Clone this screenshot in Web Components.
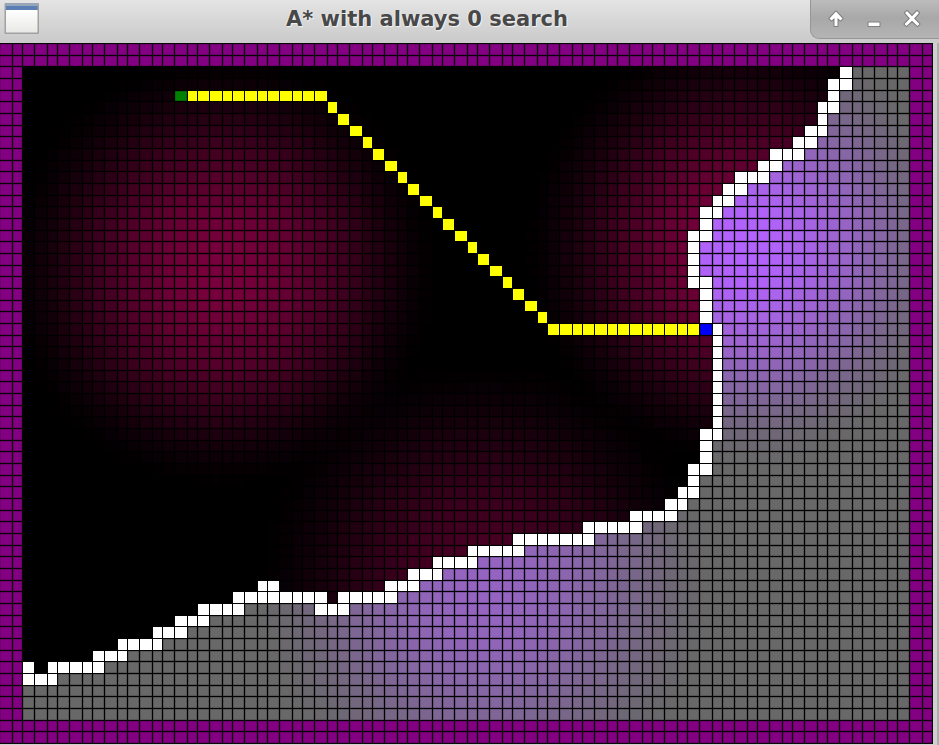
<!DOCTYPE html>
<html lang="en">
<head>
<meta charset="utf-8">
<title>A* with always 0 search</title>
<style>
  html, body { margin: 0; background: #cfd0cf; }
</style>
</head>
<body>
<app-window>
  <title-bar slot="bar">A* with always 0 search
    <window-button slot="actions" kind="up" label="Keep above"></window-button>
    <window-button slot="actions" kind="min" label="Minimize"></window-button>
    <window-button slot="actions" kind="close" label="Close"></window-button>
  </title-bar>
  <search-map></search-map>
</app-window>

<script>
class AppWindow extends HTMLElement {
  constructor() {
    super();
    this.attachShadow({ mode: "open" }).innerHTML = `
      <style>
        :host { display: flex; flex-direction: column; min-height: 100vh;
          background: linear-gradient(90deg, #cfd0cf calc(100% - 2px), #a9b0b0 calc(100% - 2px)); }
        main { padding-right: 6px; }
      </style>
      <slot name="bar"></slot>
      <main><slot></slot></main>`;
  }
}

class TitleBar extends HTMLElement {
  constructor() {
    super();
    this.attachShadow({ mode: "open" }).innerHTML = `
      <style>
        :host { display: grid; grid-template-columns: 44px 1fr auto; height: 43px;
          background: linear-gradient(#e4e4e4, #d6d6d6 50%, #cacaca); }
        svg { display: block; }
        h1 { margin: 0; padding-bottom: 6px; align-self: center; text-align: center; white-space: nowrap;
          font: bold 21px/24px "DejaVu Sans", sans-serif; color: #484848;
          text-shadow: 1px 1px 1px #f4f4f4, -1px 0 1px #e8e8e8; }
        .actions { display: flex; height: 38px; padding: 0 8px 0 6px; box-sizing: content-box;
          border: solid #969696; border-width: 0 0 1px 1px; border-bottom-left-radius: 9px;
          background: linear-gradient(#bcbcbc, #a8a8a8 48%, #b4b4b4); }
      </style>
      <svg width="44" height="40" viewBox="0 0 44 40" aria-hidden="true">
        <defs><linearGradient id="p" x1="0" y1="0" x2="0" y2="1">
          <stop offset="0" stop-color="#fff"/><stop offset="1" stop-color="#e8e8e6"/></linearGradient></defs>
        <rect x="4.5" y="3" width="34.5" height="31" rx="1" fill="#a0a2a2"/>
        <rect x="5" y="3" width="33" height="3" fill="#97a5b8"/>
        <rect x="6" y="6" width="31.5" height="4" fill="#5b7fb4"/>
        <rect x="6" y="10" width="31.5" height="22.500" fill="url(#p)"/>
      </svg>
      <h1><slot></slot></h1>
      <div class="actions"><slot name="actions"></slot></div>`;
  }
}

const GLYPHS = {
  up: '<path d="M12 4.500 L18.500 11.500 L16.500 13.500 L13.500 11 V19 H10.500 V11 L7.500 13.500 L5.500 11.500 Z"/>',
  min: '<path d="M6.500 15.500 H17.500 V19 H6.500 Z"/>',
  close: '<path d="M5 6 L7 4 L12 9.300 L17 4 L19 6 L14 11.500 L19.500 17 L17.500 19 L12 13.700 L6.500 19 L4.500 17 L10 11.500 Z"/>'
};

class WindowButton extends HTMLElement {
  connectedCallback() {
    if (this.shadowRoot) return;
    this.attachShadow({ mode: "open" }).innerHTML = `
      <style>
        :host { display: block; }
        button { display: grid; place-items: center; width: 38px; height: 38px; margin: 0; padding: 0;
          border: 0; background: none; }
        path { fill: #fff; stroke: #7e7e7e; stroke-width: 2; paint-order: stroke; stroke-linejoin: round; }
      </style>
      <button type="button" aria-label="${this.getAttribute("label")}">
        <svg width="24" height="24" viewBox="0 0 24 24">${GLYPHS[this.getAttribute("kind")]}</svg>
      </button>`;
  }
}

const COLS = 80, ROWS = 60;
/* Wall cells by row: [first column, last column] runs */
const WALLS = {
  2: [[72, 72]], 3: [[71, 72]], 4: [[71, 71]], 5: [[70, 71]], 6: [[70, 70]], 7: [[69, 70]],
  8: [[68, 69]], 9: [[66, 68]], 10: [[65, 66]], 11: [[63, 65]], 12: [[62, 63]], 13: [[61, 62]],
  14: [[60, 61]], 15: [[60, 60]], 16: [[59, 60]], 17: [[59, 59]], 18: [[59, 59]], 19: [[59, 59]],
  20: [[59, 60]], 21: [[60, 60]], 22: [[60, 60]], 23: [[60, 60]], 24: [[61, 61]], 25: [[61, 61]],
  26: [[61, 61]], 27: [[61, 61]], 28: [[61, 61]], 29: [[61, 61]], 30: [[61, 61]], 31: [[61, 61]],
  32: [[61, 61]], 33: [[60, 61]], 34: [[60, 60]], 35: [[60, 60]], 36: [[59, 60]], 37: [[59, 59]],
  38: [[58, 59]], 39: [[57, 58]], 40: [[54, 57]], 41: [[50, 54]], 42: [[44, 50]], 43: [[40, 44]],
  44: [[37, 40]], 45: [[35, 37]], 46: [[22, 23], [33, 35]], 47: [[20, 27], [29, 33]],
  48: [[17, 20], [27, 29]], 49: [[15, 17]], 50: [[13, 15]], 51: [[10, 13]], 52: [[8, 10]],
  53: [[2, 2], [4, 8]], 54: [[2, 4]]
};
/* Cost hills: centre column, centre row, radius in cells, height */
const HILLS = [[18.500, 19, 19, 0.97], [63, 17, 19, 1], [41, 46, 20, 0.6]];

const inRuns = (runs, c) => runs.some(([a, b]) => c >= a && c <= b);
const bell = d => d < 1 ? Math.pow(1 - d * d, 1.800) : 0;
const cost = (c, r) => Math.min(1, HILLS.reduce((sum, [x, y, radius, height]) =>
  sum + height * bell(Math.hypot(c - x, r - y) / radius), 0));
const mix = (a, b, t) => `rgb(${a.map((v, i) => Math.round(v + (b[i] - v) * t)).join()})`;

function cellColour(c, r) {
  if (c < 2 || r < 2 || c >= COLS - 2 || r >= ROWS - 2) return "#840082";
  if (r === 4 && c === 15) return "#008000";
  if (r === 24 && c === 60) return "#0000fa";
  if ((r === 4 && c > 15 && c < 28) || (r > 4 && r < 24 && c === r + 23) || (r === 24 && c > 46 && c < 60)) return "#ffff00";
  const runs = WALLS[r] || [];
  if (inRuns(runs, c)) return "#ffffff";
  const last = runs.length ? runs[runs.length - 1][1] : 1;
  const beyond = c > last || (r === 48 && c > 20 && c < 27);
  const t = cost(c, r);
  return beyond ? mix([104, 104, 104], [180, 98, 255], t) : mix([0, 0, 0], [124, 0, 62], t);
}

class SearchMap extends HTMLElement {
  constructor() {
    super();
    /* Three cells share 35 units, so every edge falls on a whole unit */
    const edgeX = k => 35 * Math.floor(k / 3) + [0, 13, 23][k % 3];
    const edgeY = k => 35 * Math.floor(k / 3) + [0, 12, 23][k % 3] + 1;
    let cells = "";
    for (let r = 0; r < ROWS; r++)
      for (let c = 0; c < COLS; c++)
        cells += `<rect x="${edgeX(c)}" y="${edgeY(r)}" width="${edgeX(c + 1) - edgeX(c) - 1}" height="${edgeY(r + 1) - edgeY(r) - 1}" fill="${cellColour(c, r)}"/>`;
    this.attachShadow({ mode: "open" }).innerHTML = `
      <style>
        :host { display: block; }
        svg { display: block; width: 100%; height: auto; background: #0c080c; }
        rect { stroke: #000; stroke-opacity: 0.35; stroke-width: 1; }
        rect[fill="#ffffff"], rect[fill="#ffff00"] { stroke: none; }
      </style>
      <svg viewBox="0 0 ${edgeX(COLS)} ${edgeY(ROWS)}" role="img" aria-label="Search grid with path">
        <rect x="23" y="24" width="887" height="653" fill="#000"/>${cells}</svg>`;
  }
}

customElements.define("app-window", AppWindow);
customElements.define("title-bar", TitleBar);
customElements.define("window-button", WindowButton);
customElements.define("search-map", SearchMap);
</script>
</body>
</html>
